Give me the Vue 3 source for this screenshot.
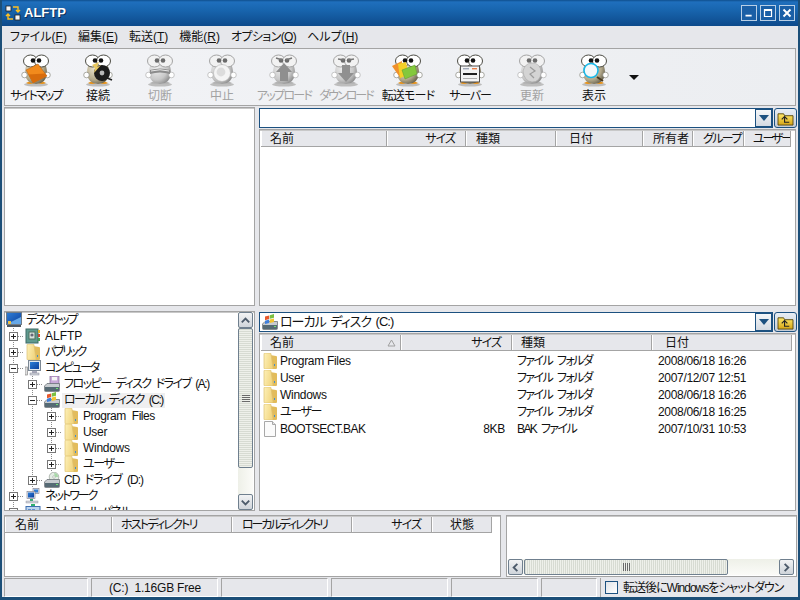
<template>
  <div class="window">
    <!-- 共用アイコン -->
    <svg class="defs" width="0" height="0">
      <defs>
        <radialGradient id="g-body" cx="0.35" cy="0.35" r="0.8">
          <stop offset="0" stop-color="#ece6d2" />
          <stop offset="0.6" stop-color="#b4aa8c" />
          <stop offset="1" stop-color="#4f4a3a" />
        </radialGradient>
        <radialGradient id="g-off" cx="0.35" cy="0.35" r="0.8">
          <stop offset="0" stop-color="#f0f0f0" />
          <stop offset="0.6" stop-color="#c8c8c8" />
          <stop offset="1" stop-color="#7c7c7c" />
        </radialGradient>
        <linearGradient id="g-folder" x1="0" y1="0" x2="1" y2="0.3">
          <stop offset="0" stop-color="#fdf0b8" />
          <stop offset="1" stop-color="#f2d680" />
        </linearGradient>
        <linearGradient id="g-title" x1="0" y1="0" x2="0" y2="1">
          <stop offset="0" stop-color="#ffe96a" />
          <stop offset="1" stop-color="#d6a516" />
        </linearGradient>
        <linearGradient id="g-screen" x1="0" y1="0" x2="1" y2="1">
          <stop offset="0" stop-color="#2f7fd8" />
          <stop offset="1" stop-color="#0c3f9c" />
        </linearGradient>
      </defs>

      <symbol id="i-folder" viewBox="0 0 16 16">
        <path d="M8 2 L14 3 Q15 3 15 4 L15 15 Q15 16 14 16 L8 16 Z" fill="#e2bc5c" />
        <path d="M2 1 Q2 0 3 0 L8 0 Q9 0 9 1 L11 15 Q11 16 10 16 L3 16 Q2 16 2 15 Z" fill="url(#g-folder)" stroke="#dcc070" stroke-width="0.7" />
        <rect x="12" y="11" width="1" height="2" fill="#3f8fd0" />
      </symbol>
      <symbol id="i-file" viewBox="0 0 16 16">
        <path d="M2.5 0.5 H10.5 L13.5 3.5 V15.5 H2.5 Z" fill="#fbfbfb" stroke="#a8a8a8" />
        <path d="M10.5 0.5 V3.5 H13.5" fill="#e6e6e6" stroke="#a8a8a8" />
      </symbol>
      <symbol id="i-desktop" viewBox="0 0 16 16">
        <rect x="0.5" y="0.5" width="15" height="12" fill="url(#g-screen)" stroke="#6f7c88" />
        <path d="M1 12 L15 5 V12 Z" fill="#66a8e8" />
        <rect x="1" y="13" width="14" height="2" fill="#4c5660" />
        <rect x="2" y="9" width="3" height="3" fill="#f0c040" />
      </symbol>
      <symbol id="i-app" viewBox="0 0 16 16">
        <rect x="1" y="1" width="12" height="14" fill="#5f9a8e" stroke="#3f6a66" />
        <rect x="4" y="4" width="6" height="7" fill="#d8e4dc" stroke="#4f6f5f" />
        <circle cx="7" cy="7" r="1.6" fill="#667" />
        <rect x="13" y="2" width="2" height="3" fill="#e8b020" />
        <rect x="13" y="6" width="2" height="3" fill="#d04a30" />
        <rect x="13" y="10" width="2" height="3" fill="#4aa050" />
      </symbol>
      <symbol id="i-computer" viewBox="0 0 16 16">
        <rect x="0" y="7" width="2.5" height="8" fill="#e0e0e0" stroke="#777" stroke-width="0.6" />
        <rect x="3.5" y="0.5" width="12" height="10" fill="#e4e8ee" stroke="#7c8894" />
        <rect x="5" y="2" width="9" height="7" fill="url(#g-screen)" />
        <rect x="7" y="11" width="5" height="2" fill="#aab" />
        <rect x="5" y="13" width="9" height="2" fill="#d0d4da" stroke="#889" stroke-width="0.5" />
      </symbol>
      <symbol id="i-floppy" viewBox="0 0 16 16">
        <rect x="6" y="0" width="9" height="9" fill="#c9a8d8" stroke="#7f6a94" stroke-width="0.7" />
        <rect x="8" y="1" width="5" height="3.4" fill="#f4f4f4" />
        <path d="M0.5 10 L3 7.5 H15.5 V14.5 Q15.5 15.5 14.5 15.5 H1.5 Q0.5 15.5 0.5 14.5 Z" fill="#c8ccd0" stroke="#5f666c" stroke-width="0.7" />
        <rect x="1" y="11" width="14" height="4" fill="#566a74" />
        <rect x="12" y="12" width="2" height="1" fill="#6fe070" />
      </symbol>
      <symbol id="i-disk" viewBox="0 0 16 16">
        <path d="M0.5 10 L3 7.5 H15.5 V14.5 Q15.5 15.5 14.5 15.5 H1.5 Q0.5 15.5 0.5 14.5 Z" fill="#c8ccd0" stroke="#5f666c" stroke-width="0.7" />
        <rect x="1" y="11" width="14" height="4" fill="#566a74" />
        <rect x="12" y="12" width="2" height="1" fill="#6fe070" />
        <path d="M3 2.6 L7.2 1.5 V5 L3 6.2 Z" fill="#e8582c" />
        <path d="M7.8 1.3 L12 0 V3.8 L7.8 4.8 Z" fill="#7cc040" />
        <path d="M3 6.8 L7.2 5.6 V9 L3 10 Z" fill="#3f7fdc" />
        <path d="M7.8 5.4 L12 4.4 V8 L7.8 9 Z" fill="#f4c430" />
      </symbol>
      <symbol id="i-cd" viewBox="0 0 16 16">
        <circle cx="10" cy="5" r="4.8" fill="#e4ece4" stroke="#8a948a" stroke-width="0.6" />
        <circle cx="10" cy="5" r="1.3" fill="#fff" stroke="#8a948a" stroke-width="0.5" />
        <path d="M10 1 A4 4 0 0 1 14 5 H11 Z" fill="#a8d8a8" />
        <path d="M0.5 10 L3 7.5 H15.5 V14.5 Q15.5 15.5 14.5 15.5 H1.5 Q0.5 15.5 0.5 14.5 Z" fill="#c8ccd0" stroke="#5f666c" stroke-width="0.7" />
        <rect x="1" y="11" width="14" height="4" fill="#566a74" />
        <rect x="12" y="12" width="2" height="1" fill="#6fe070" />
      </symbol>
      <symbol id="i-network" viewBox="0 0 16 16">
        <rect x="8" y="0.5" width="6" height="5" fill="#dce4ee" stroke="#778" stroke-width="0.6" />
        <rect x="9" y="1.5" width="4" height="3" fill="#2f7fd8" />
        <rect x="2" y="3.5" width="8" height="7" fill="#e4e8ee" stroke="#778" stroke-width="0.6" />
        <rect x="3" y="4.5" width="6" height="5" fill="url(#g-screen)" />
        <rect x="5" y="11" width="3" height="2" fill="#2fb070" />
        <rect x="1" y="13" width="12" height="2" fill="#d0d4da" stroke="#889" stroke-width="0.4" />
      </symbol>
      <symbol id="i-panel" viewBox="0 0 16 16">
        <rect x="6" y="0" width="4" height="2" fill="#2fb070" />
        <rect x="1" y="2.5" width="14" height="13" fill="#bcd4ee" stroke="#3f6fb0" />
        <rect x="3" y="5" width="3" height="3" fill="#5f8fd0" />
        <rect x="7" y="5" width="3" height="3" fill="#5f8fd0" />
      </symbol>

      <!-- マスコットの持ち物 -->
      <symbol id="p-sitemap" viewBox="0 0 32 34">
        <path d="M18 11 L27 23 L13 30 L6 17 Z" fill="#f28a1c" stroke="#a85a10" stroke-width="0.5" />
        <path d="M8.5 21.5 L25 20.5 L27 23 L13 30 Z" fill="#d86c0c" />
      </symbol>
      <symbol id="p-connect" viewBox="0 0 32 34">
        <circle cx="20" cy="20" r="8" fill="#1c1c1c" />
        <circle cx="20" cy="20" r="2.4" fill="#b8b8b8" />
        <path d="M10 12 L17 9 L15 14 L19 12 L12 20 L13 15 Z" fill="#e8c860" />
        <path d="M25 25 L30 27" stroke="#1c1c1c" stroke-width="1.6" />
      </symbol>
      <symbol id="p-cut" viewBox="0 0 32 34">
        <path d="M6 17 Q16 14 26 17 L26 21 Q16 18 6 21 Z" fill="#8c8c8c" />
        <path d="M7 18 Q16 15.5 25 18" fill="none" stroke="#e8e8e8" />
      </symbol>
      <symbol id="p-stop" viewBox="0 0 32 34">
        <circle cx="16" cy="20" r="8.5" fill="#f4f4f4" stroke="#b4b4b4" stroke-width="0.6" />
        <circle cx="15" cy="19" r="4.4" fill="#dcdcdc" />
      </symbol>
      <symbol id="p-up" viewBox="0 0 32 34">
        <path d="M16 10 L24 19 H20 V28 H12 V19 H8 Z" fill="#8f8f8f" />
        <path d="M8 5 L14 7 M24 5 L18 7" stroke="#777" stroke-width="1.4" />
      </symbol>
      <symbol id="p-down" viewBox="0 0 32 34">
        <path d="M16 29 L24 20 H20 V12 H12 V20 H8 Z" fill="#909090" />
        <path d="M8 6 L14 7 M24 6 L18 7" stroke="#777" stroke-width="1.4" />
      </symbol>
      <symbol id="p-mode" viewBox="0 0 32 34">
        <path d="M0 13 L10 8 L9 26 Z" fill="#f0902c" />
        <path d="M6 11 L14 9 L17 22 L8 25 Z" fill="#f4d028" />
        <path d="M10 17 L23 12 L25 21 L13 26 Z" fill="#84c83c" stroke="#5c9a2c" stroke-width="0.5" />
      </symbol>
      <symbol id="p-server" viewBox="0 0 32 34">
        <rect x="6.5" y="13" width="19" height="16" fill="#f4f4f4" stroke="#4c4c4c" />
        <rect x="9" y="15" width="6" height="1.4" fill="#a0a8b8" />
        <rect x="18" y="15" width="5" height="1.4" fill="#e8804c" />
        <rect x="9" y="20" width="14" height="2" fill="#202020" />
        <rect x="9" y="25" width="14" height="1" fill="#b0b0b0" />
      </symbol>
      <symbol id="p-refresh" viewBox="0 0 32 34">
        <path d="M7 18 Q9 10 16 10 Q25 10 25 20 Q24 29 16 29 Q8 28 7 18 Z" fill="#d4d4d4" stroke="#a0a0a0" stroke-width="0.5" />
        <path d="M14 14 L19 18 L14 21 L18 25" fill="none" stroke="#9c9c9c" stroke-width="1.2" />
      </symbol>
      <symbol id="p-view" viewBox="0 0 32 34">
        <path d="M19 24 L25 28" stroke="#4a3a20" stroke-width="2" />
        <circle cx="13" cy="17.5" r="7" fill="#f4f8fa" stroke="#18b8e8" stroke-width="1.6" />
      </symbol>
    </svg>

    <header class="titlebar">
      <svg class="app-icon" viewBox="0 0 16 16">
        <rect x="1" y="1" width="5" height="5" fill="#f4f4f4" stroke="#222" stroke-width="0.8" />
        <rect x="10" y="10" width="5" height="5" fill="#f4f4f4" stroke="#222" stroke-width="0.8" />
        <path d="M8 2 H13 V6 M11 5 L13 7 L15 5" fill="none" stroke="#ffc020" stroke-width="1.4" />
        <path d="M8 14 H3 V10 M1 11 L3 9 L5 11" fill="none" stroke="#ffc020" stroke-width="1.4" />
      </svg>
      <span class="title-text">ALFTP</span>
      <div class="win-buttons">
        <button class="win-btn"><svg viewBox="0 0 16 16"><rect x="4" y="10" width="7" height="2" fill="#fff" /></svg></button>
        <button class="win-btn"><svg viewBox="0 0 16 16"><path d="M4 4 H12 V12 H4 Z M4 5 H12" fill="none" stroke="#fff" stroke-width="1.4" /></svg></button>
        <button class="win-btn"><svg viewBox="0 0 16 16"><path d="M4 4 L12 12 M12 4 L4 12" stroke="#fff" stroke-width="2.2" /></svg></button>
      </div>
    </header>

    <nav class="menubar">
      <span v-for="m in menus" :key="m.label" class="menu-item" :style="{ letterSpacing: (m.ls || 0) + 'px' }">{{ m.label }}(<u>{{ m.key }}</u>)</span>
    </nav>

    <div class="toolbar">
      <div v-for="b in tools" :key="b.label" class="tool" :class="{ off: b.off }">
        <svg class="mascot" viewBox="0 0 32 34">
          <ellipse cx="16" cy="31.5" rx="12" ry="2" fill="#bdbdbd" />
          <path class="feet" d="M6 30 Q10 27 14 30 Q10 32 6 30 Z M18 30 Q22 27 26 30 Q22 32 18 30 Z" />
          <path class="body" d="M16 6 Q27 7 27 20 Q26 31 16 31 Q6 31 5 20 Q5 7 16 6 Z" />
          <ellipse class="eye" cx="10.5" cy="8" rx="7" ry="6" />
          <ellipse class="eye" cx="21.5" cy="8" rx="7" ry="6" />
          <circle class="pupil" cx="13" cy="7.5" r="2.3" />
          <circle class="pupil" cx="19" cy="7.5" r="2.3" />
          <circle class="hand" cx="4.5" cy="22" r="2.8" />
          <circle class="hand" cx="27.5" cy="22" r="2.8" />
          <use :href="'#p-' + b.prop" width="32" height="34" />
        </svg>
        <span class="tool-label" :style="{ letterSpacing: (b.ls || 0) + 'px' }">{{ b.label }}</span>
      </div>
      <span class="tool-more"></span>
    </div>

    <div class="panes">
      <div class="box"></div>
      <div class="side">
        <div class="path-row">
          <div class="combo">
            <span class="combo-text"></span>
            <span class="combo-btn"><i></i></span>
          </div>
          <button class="up-btn"><svg viewBox="0 0 18 16"><path d="M1 3 H7 L8 5 H17 V15 H1 Z" fill="url(#g-title)" stroke="#5a4a10" /><path d="M5 9 L8 6 L11 9 M8 7 V12 H13" fill="none" stroke="#222" stroke-width="1.2" /></svg></button>
        </div>
        <div class="box list">
          <div class="list-head">
            <span v-for="c in remoteCols" :key="c.label" class="th" :class="c.align" :style="colStyle(c)">{{ c.label }}</span>
          </div>
        </div>
      </div>

      <div class="box tree-box">
        <div class="tree">
          <div v-for="n in tree" :key="n.label" class="tree-row">
            <span v-for="g in n.level - 1" :key="g" class="guide"></span>
            <span v-if="n.level" class="expander">
              <i :class="{ open: n.open }"></i>
            </span>
            <svg class="tree-icon"><use :href="'#i-' + n.icon" width="16" height="16" /></svg>
            <span class="tree-label" :class="{ selected: n.selected }" :style="{ letterSpacing: (n.ls || 0) + 'px' }">{{ n.label }}</span>
          </div>
        </div>
        <div class="vscroll">
          <span class="sb-btn"><svg viewBox="0 0 14 14"><path d="M3 9 L7 5 L11 9" fill="none" stroke="#4c5a6a" stroke-width="2" /></svg></span>
          <span class="sb-thumb"><b></b></span>
          <span class="sb-track"></span>
          <span class="sb-btn"><svg viewBox="0 0 14 14"><path d="M3 5 L7 9 L11 5" fill="none" stroke="#4c5a6a" stroke-width="2" /></svg></span>
        </div>
      </div>
      <div class="side">
        <div class="path-row">
          <div class="combo">
            <svg class="tree-icon combo-icon"><use href="#i-disk" width="16" height="16" /></svg>
            <span class="combo-text">ローカル ディスク (C:)</span>
            <span class="combo-btn"><i></i></span>
          </div>
          <button class="up-btn"><svg viewBox="0 0 18 16"><path d="M1 3 H7 L8 5 H17 V15 H1 Z" fill="url(#g-title)" stroke="#5a4a10" /><path d="M5 9 L8 6 L11 9 M8 7 V12 H13" fill="none" stroke="#222" stroke-width="1.2" /></svg></button>
        </div>
        <div class="box list">
          <div class="list-head">
            <span v-for="c in localCols" :key="c.label" class="th" :class="c.align" :style="colStyle(c)">{{ c.label }}<svg v-if="c.sort" class="sort-mark" viewBox="0 0 9 8"><path d="M4.5 1 L8 7 H1 Z" fill="none" stroke="#a0a0a0" /></svg></span>
          </div>
          <div v-for="f in files" :key="f.name" class="file-row">
            <span class="file-name" :style="{ letterSpacing: f.ls + 'px' }">
              <svg class="file-icon"><use :href="'#i-' + f.icon" width="16" height="16" /></svg>{{ f.name }}
            </span>
            <span class="file-size">{{ f.size }}</span>
            <span class="file-type">{{ f.type }}</span>
            <span class="file-date">{{ f.date }}</span>
          </div>
        </div>
      </div>
    </div>

    <div class="transfers">
      <div class="box queue">
        <div class="list-head">
          <span v-for="c in queueCols" :key="c.label" class="th" :class="c.align" :style="colStyle(c)">{{ c.label }}</span>
        </div>
      </div>
      <div class="box log">
        <div class="hscroll">
          <span class="sb-btn"><svg viewBox="0 0 14 14"><path d="M9 3 L5 7 L9 11" fill="none" stroke="#4c5a6a" stroke-width="2" /></svg></span>
          <span class="sb-thumb h"><b></b></span>
          <span class="sb-track"></span>
          <span class="sb-btn"><svg viewBox="0 0 14 14"><path d="M5 3 L9 7 L5 11" fill="none" stroke="#4c5a6a" stroke-width="2" /></svg></span>
        </div>
      </div>
    </div>

    <footer class="statusbar">
      <span class="cell" style="width: 84px"></span>
      <span class="cell free" style="width: 127px">(C:)&nbsp; 1.16GB Free</span>
      <span class="cell" style="width: 107px"></span>
      <span class="cell" style="width: 117px"></span>
      <span class="cell" style="width: 87px"></span>
      <span class="cell" style="width: 56px"></span>
      <label class="shutdown"><i class="check"></i><span class="shutdown-text">転送後にWindowsをシャットダウン</span></label>
    </footer>
  </div>
</template>

<script setup>
const menus = [
  { label: 'ファイル', key: 'F' },
  { label: '編集', key: 'E' },
  { label: '転送', key: 'T' },
  { label: '機能', key: 'R' },
  { label: 'オプション', key: 'O', ls: -0.6 },
  { label: 'ヘルプ', key: 'H' }
]

const tools = [
  { label: 'サイトマップ', prop: 'sitemap', ls: -1.8 },
  { label: '接続', prop: 'connect' },
  { label: '切断', prop: 'cut', off: true },
  { label: '中止', prop: 'stop', off: true },
  { label: 'アップロード', prop: 'up', off: true, ls: -1.7 },
  { label: 'ダウンロード', prop: 'down', off: true, ls: -2 },
  { label: '転送モード', prop: 'mode', ls: -0.8 },
  { label: 'サーバー', prop: 'server', ls: -1.2 },
  { label: '更新', prop: 'refresh', off: true },
  { label: '表示', prop: 'view' }
]

const remoteCols = [
  { label: '名前', w: 126, pl: 9 },
  { label: 'サイズ', w: 79, pr: 10, align: 'right', ls: -1 },
  { label: '種類', w: 90, pl: 10 },
  { label: '日付', w: 87, pl: 13 },
  { label: '所有者', w: 50, pl: 10 },
  { label: 'グループ', w: 51, pl: 10, ls: -1.6 },
  { label: 'ユーザー', w: 47, pl: 9, ls: -2.2 }
]

const localCols = [
  { label: '名前', w: 140, pl: 9, sort: true },
  { label: 'サイズ', w: 111, pr: 10, align: 'right', ls: -1 },
  { label: '種類', w: 140, pl: 9 },
  { label: '日付', w: 140, pl: 13 }
]

const queueCols = [
  { label: '名前', w: 107, pl: 10 },
  { label: 'ホストディレクトリ', w: 120, pl: 9, ls: -1.8 },
  { label: 'ローカルディレクトリ', w: 120, pl: 10, ls: -2.1 },
  { label: 'サイズ', w: 80, pr: 10, align: 'right', ls: -1 },
  { label: '状態', w: 60, pl: 18 }
]

const colStyle = (c) => ({
  width: c.w + 'px',
  paddingLeft: (c.pl || 0) + 'px',
  paddingRight: (c.pr || 0) + 'px',
  letterSpacing: (c.ls || 0) + 'px'
})

const tree = [
  { label: 'デスクトップ', level: 0, icon: 'desktop', ls: -2 },
  { label: 'ALFTP', level: 1, icon: 'app' },
  { label: 'パブリック', level: 1, icon: 'folder', ls: -2.4 },
  { label: 'コンピュータ', level: 1, icon: 'computer', open: true, ls: -2.1 },
  { label: 'フロッピー ディスク ドライブ (A:)', level: 2, icon: 'floppy', ls: -1.5 },
  { label: 'ローカル ディスク (C:)', level: 2, icon: 'disk', open: true, selected: true, ls: -1.5 },
  { label: 'Program Files', level: 3, icon: 'folder', ls: -0.45 },
  { label: 'User', level: 3, icon: 'folder', ls: -0.3 },
  { label: 'Windows', level: 3, icon: 'folder', ls: -0.3 },
  { label: 'ユーザー', level: 3, icon: 'folder', ls: -1.4 },
  { label: 'CD ドライブ (D:)', level: 2, icon: 'cd', ls: -1 },
  { label: 'ネットワーク', level: 1, icon: 'network', ls: -2 },
  { label: 'コントロール パネル', level: 1, icon: 'panel', ls: -2.2 }
]

const folderType = 'ファイル フォルダ'
const files = [
  { name: 'Program Files', icon: 'folder', size: '', type: folderType, date: '2008/06/18 16:26', ls: -0.3 },
  { name: 'User', icon: 'folder', size: '', type: folderType, date: '2007/12/07 12:51', ls: -0.3 },
  { name: 'Windows', icon: 'folder', size: '', type: folderType, date: '2008/06/18 16:26', ls: -0.3 },
  { name: 'ユーザー', icon: 'folder', size: '', type: folderType, date: '2008/06/18 16:25', ls: -1.4 },
  { name: 'BOOTSECT.BAK', icon: 'file', size: '8KB', type: 'BAK ファイル', date: '2007/10/31 10:53', ls: -0.55 }
]
</script>

<style>
html,
body {
  margin: 0;
  background: #e6e7eb;
}
</style>

<style scoped>
.window {
  width: 800px;
  height: 600px;
  box-sizing: border-box;
  display: flex;
  flex-direction: column;
  background: #e6e7eb;
  border: solid #1c4f78;
  border-width: 0 2px 3px;
  font: 12px/16px "Liberation Sans", "Noto Sans CJK JP", sans-serif;
  font-feature-settings: "palt";
  color: #111;
  overflow: hidden;
}

.defs {
  display: block;
  flex: none;
}

/* タイトルバー */
.titlebar {
  height: 26px;
  margin: 0 -2px;
  flex: none;
  display: flex;
  align-items: center;
  padding: 0 5px 0 5px;
  background: linear-gradient(#0f4f8e 0, #1f6fbd 2px, #1865ae 10px, #0d4a8b 100%);
}

.app-icon {
  width: 16px;
  height: 16px;
}

.title-text {
  margin-left: 3px;
  color: #fff;
  font-weight: bold;
  font-size: 13px;
  text-shadow: 1px 1px 0 #0a2f5a;
}

.win-buttons {
  margin-left: auto;
  display: flex;
  gap: 3px;
}

.win-btn {
  width: 16px;
  height: 16px;
  padding: 0;
  background: #1a5fa6;
  border: 1px solid #b8cfe6;
}

.win-btn svg {
  display: block;
  width: 14px;
  height: 14px;
}

/* メニュー */
.menubar {
  height: 22px;
  flex: none;
  display: flex;
  align-items: center;
  gap: 11px;
  padding-left: 8px;
}

/* ツールバー */
.toolbar {
  height: 58px;
  flex: none;
  box-sizing: border-box;
  margin: 0 2px 1px;
  display: flex;
  padding-top: 4px;
  background: linear-gradient(90deg, #f2f3f6, #eceef1);
  border: 1px solid #a4a4a4;
}

.tool {
  width: 62px;
  flex: none;
  display: flex;
  flex-direction: column;
  align-items: center;
}

.mascot {
  width: 32px;
  height: 34px;
  flex: none;
}

.tool-label {
  white-space: nowrap;
  font-size: 12px;
  line-height: 16px;
  margin-top: 1px;
}

.tool.off .tool-label {
  color: #a2a2a2;
}

.feet {
  fill: #e8941c;
}

.off .feet {
  fill: #b4b4b4;
}

.body {
  fill: url(#g-body);
}

.off .body {
  fill: url(#g-off);
}

.eye {
  fill: #fff;
  stroke: #4c4c44;
  stroke-width: 1;
}

.off .eye {
  stroke: #a4a4a4;
  fill: #f2f2f2;
}

.pupil {
  fill: #111;
}

.off .pupil {
  fill: #6a6a6a;
}

.hand {
  fill: #fff;
  stroke: #77776c;
  stroke-width: 0.6;
}

.off .hand {
  stroke: #a4a4a4;
}

.tool-more {
  margin: 22px 0 0 4px;
  width: 0;
  height: 0;
  border: 5px solid transparent;
  border-top: 5px solid #111;
  border-bottom: 0;
}

/* ペイン */
.panes {
  flex: none;
  display: grid;
  grid-template-columns: 251px 537px;
  grid-template-rows: 199px 200px;
  gap: 5px 4px;
  padding-left: 2px;
}

.box {
  box-sizing: border-box;
  background: #fff;
  border: 1px solid #a4a4a4;
  box-shadow: inset 0 1px 0 #c8c8c8;
}

.side {
  display: flex;
  flex-direction: column;
  padding-top: 1px;
  min-height: 0;
}

.path-row {
  height: 20px;
  flex: none;
  display: flex;
  gap: 1px;
  margin: 0 -1px 1px 0;
}

.combo {
  flex: 1;
  box-sizing: border-box;
  display: flex;
  align-items: center;
  background: #fff;
  border: 1px solid #1c5180;
  padding: 0 0 0 1px;
}

.combo-icon {
  margin-right: 2px;
}

.combo-text {
  font-size: 13px;
  letter-spacing: -1px;
  word-spacing: 2px;
}

.combo-btn {
  margin-left: auto;
  width: 15px;
  height: 16px;
  display: flex;
  align-items: center;
  justify-content: center;
  background: linear-gradient(#f4f6f8, #d4dae2);
  border: 1px solid #1c5180;
}

.combo-btn i {
  width: 0;
  height: 0;
  border: 5px solid transparent;
  border-top: 6px solid #1c5180;
  border-bottom: 0;
}

.up-btn {
  width: 23px;
  height: 20px;
  padding: 0;
  display: flex;
  align-items: center;
  justify-content: center;
  background: linear-gradient(#e8eef4, #c4ccd6);
  border: 1px solid #1c5180;
  border-radius: 3px;
}

.up-btn svg {
  width: 17px;
  height: 15px;
}

.list {
  flex: 1;
  min-height: 0;
  overflow: hidden;
  padding-top: 1px;
}

.list-head {
  display: flex;
  height: 16px;
  padding-left: 1px;
}

.queue .list-head {
  padding-left: 0;
}

.th {
  box-sizing: border-box;
  flex: none;
  display: flex;
  align-items: center;
  justify-content: space-between;
  white-space: nowrap;
  background: #e6e7eb;
  border-right: 1px solid #a4a4a4;
  border-bottom: 1px solid #a4a4a4;
  box-shadow: inset 1px 0 0 #fff;
  overflow: hidden;
}

.th.right {
  justify-content: flex-end;
}

.sort-mark {
  width: 9px;
  height: 8px;
  margin-right: 4px;
}

.list-head + .file-row {
  margin-top: 2px;
}

.file-row {
  display: grid;
  grid-template-columns: 138px 105px 153px 1fr;
  height: 16.8px;
  align-items: center;
  white-space: nowrap;
  padding-left: 2px;
}

.file-name {
  display: flex;
  align-items: center;
}

.file-icon {
  width: 16px;
  height: 16px;
  margin-right: 2px;
}

.file-size {
  text-align: right;
  letter-spacing: -0.3px;
}

.file-type {
  padding-left: 12px;
  letter-spacing: -1.6px;
  word-spacing: 3px;
}

.file-date {
  letter-spacing: -0.33px;
}

/* ツリー */
.tree-box {
  display: flex;
  overflow: hidden;
}

.tree {
  flex: 1;
  min-width: 0;
  overflow: hidden;
}

.tree-row {
  height: 16px;
  display: flex;
  align-items: center;
  white-space: nowrap;
}

.guide,
.expander {
  width: 19px;
  height: 16px;
  flex: none;
  box-sizing: border-box;
  position: relative;
  background: repeating-linear-gradient(#8a8a8a 0 1px, transparent 1px 2px) 8px 0 / 1px 100% no-repeat;
}

.expander {
  display: flex;
  align-items: center;
  padding-left: 4px;
}

.expander::after {
  content: "";
  position: absolute;
  left: 13px;
  top: 8px;
  width: 6px;
  height: 1px;
  background: repeating-linear-gradient(90deg, #8a8a8a 0 1px, transparent 1px 2px);
}

.expander i {
  box-sizing: border-box;
  width: 9px;
  height: 9px;
  border: 1px solid #777;
  background:
    linear-gradient(#222, #222) center / 5px 1px no-repeat,
    linear-gradient(#222, #222) center / 1px 5px no-repeat,
    #fff;
}

.expander i.open {
  background:
    linear-gradient(#222, #222) center / 5px 1px no-repeat,
    #fff;
}

.tree-icon {
  width: 16px;
  height: 16px;
  flex: none;
  margin-left: 1px;
}

.tree-label {
  margin-left: 2px;
  padding: 0 2px;
  line-height: 15px;
  word-spacing: 3px;
}

.tree-label.selected {
  background: #efeff0;
}

/* スクロールバー */
.vscroll {
  width: 15px;
  flex: none;
  margin: 0 1px 0 0;
  display: flex;
  flex-direction: column;
  background: linear-gradient(90deg, #eef0e8, #fbfbf8);
}

.sb-btn {
  flex: none;
  width: 15px;
  height: 16px;
  box-sizing: border-box;
  display: flex;
  align-items: center;
  justify-content: center;
  background: linear-gradient(#f2f3f4, #cfd4da);
  border: 1px solid #6f7f8e;
  border-radius: 2px;
}

.sb-btn svg {
  width: 13px;
  height: 13px;
}

.sb-thumb {
  height: 140px;
  flex: none;
  box-sizing: border-box;
  display: flex;
  align-items: center;
  justify-content: center;
  background: repeating-linear-gradient(#d7dbd2 0 1px, #eef0ea 1px 2px);
  border: 1px solid #6f7f8e;
  border-radius: 2px;
}

.sb-thumb b {
  width: 8px;
  height: 7px;
  background: repeating-linear-gradient(#6a6a6a 0 1px, transparent 1px 2px);
}

.sb-track {
  flex: 1;
}

.transfers {
  flex: none;
  height: 62px;
  margin-top: 4px;
  padding-left: 2px;
  display: flex;
  gap: 5px;
}

.queue {
  width: 497px;
  padding-top: 1px;
}

.log {
  width: 291px;
  display: flex;
  flex-direction: column;
  justify-content: flex-end;
  padding: 0 2px 1px 1px;
}

.hscroll {
  height: 16px;
  display: flex;
  gap: 1px;
  background: linear-gradient(#eef0e8, #fbfbf8);
}

.hscroll .sb-thumb {
  width: 204px;
  height: 16px;
  background: repeating-linear-gradient(90deg, #d7dbd2 0 1px, #eef0ea 1px 2px);
}

.hscroll .sb-thumb b {
  width: 7px;
  height: 8px;
  background: repeating-linear-gradient(90deg, #6a6a6a 0 1px, transparent 1px 2px);
}

/* ステータスバー */
.statusbar {
  flex: 1;
  display: flex;
  gap: 3px;
  margin-top: 1px;
  padding: 0 2px;
  min-height: 0;
}

.cell {
  box-sizing: border-box;
  flex: none;
  border: solid;
  border-width: 1px;
  border-color: #a4a4a4 #fff #fff #a4a4a4;
  white-space: nowrap;
}

.free {
  padding: 1px 0 0 17px;
  letter-spacing: -0.2px;
}

.shutdown {
  flex: 1;
  display: flex;
  align-items: center;
  gap: 5px;
  padding-left: 4px;
  border-left: 1px solid #a4a4a4;
  white-space: nowrap;
}

.shutdown-text {
  letter-spacing: -1px;
}

.check {
  width: 13px;
  height: 13px;
  box-sizing: border-box;
  border: 1px solid #1c5180;
  background: linear-gradient(135deg, #dfe3e8, #fff);
}
</style>
